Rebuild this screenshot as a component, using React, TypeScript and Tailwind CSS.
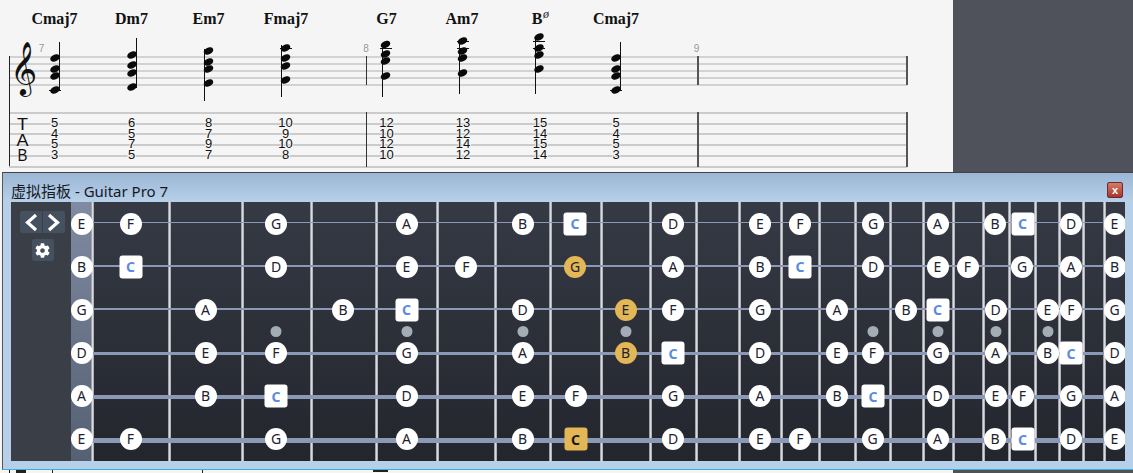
import { FaCog } from 'react-icons/fa'

const chords = [
	{ name: 'Cmaj7', nameX: 54.5, stem: 59, head: 55, top: 42, bottom: 90, notes: [58, 69, 76, 90], ledgers: [90], tab: ['5', '4', '5', '3'], tabX: 54.5 },
	{ name: 'Dm7', nameX: 131.5, stem: 136.5, head: 132, top: 38, bottom: 88, notes: [55, 65, 73, 87], ledgers: [], tab: ['6', '5', '7', '5'], tabX: 131.5 },
	{ name: 'Em7', nameX: 208.5, stem: 204.5, head: 208.5, top: 49, bottom: 101, notes: [51, 62, 69, 83], ledgers: [], tab: ['8', '7', '9', '7'], tabX: 208.5 },
	{ name: 'Fmaj7', nameX: 286, stem: 281.5, head: 285.5, top: 45, bottom: 97, notes: [48, 58, 66, 80], ledgers: [48], tab: ['10', '9', '10', '8'], tabX: 285.5 },
	{ name: 'G7', nameX: 386.5, stem: 382.5, head: 385.5, top: 48, bottom: 97, notes: [44.5, 54, 61, 76], ledgers: [48], tab: ['12', '10', '12', '10'], tabX: 386.5 },
	{ name: 'Am7', nameX: 462, stem: 459.5, head: 462.5, top: 41, bottom: 94, notes: [41, 51, 58, 73], ledgers: [41, 48], tab: ['13', '12', '14', '12'], tabX: 463 },
	{ name: 'B', nameX: 537, stem: 535.5, head: 539, top: 38, bottom: 94, notes: [37, 48, 55, 69], ledgers: [41, 48], tab: ['15', '14', '15', '14'], tabX: 540 },
	{ name: 'Cmaj7', nameX: 616, stem: 620.5, head: 616, top: 42, bottom: 90, notes: [58, 69, 76, 90], ledgers: [90], tab: ['5', '4', '5', '3'], tabX: 616 },
]

const staffLines = [56, 63, 70, 77, 84]
const tabLines = [112, 123, 133, 144, 155, 166]
const tabBaselines = [127, 138, 148, 159]

const frets = [92, 169, 242, 311, 376, 437, 495, 550, 601, 650, 696, 739, 781, 819, 855, 890, 923, 953, 983, 1009, 1035, 1059, 1083, 1104]
const inlays = [276, 406.5, 522.5, 625.5, 872.5, 937.5, 995.5, 1047.5]

type Note = { n: string; x: number; gold?: boolean }

const strings: { thickness: string; notes: Note[] }[] = [
	{
		thickness: 'h-px',
		notes: [
			{ n: 'E', x: 81.5 }, { n: 'F', x: 130.5 }, { n: 'G', x: 276 }, { n: 'A', x: 406.5 }, { n: 'B', x: 522.5 },
			{ n: 'C', x: 575 }, { n: 'D', x: 673 }, { n: 'E', x: 760 }, { n: 'F', x: 800 }, { n: 'G', x: 873 },
			{ n: 'A', x: 937.5 }, { n: 'B', x: 995 }, { n: 'C', x: 1022.5 }, { n: 'D', x: 1071 }, { n: 'E', x: 1114.5 },
		],
	},
	{
		thickness: 'h-[2px]',
		notes: [
			{ n: 'B', x: 81.5 }, { n: 'C', x: 130.5 }, { n: 'D', x: 276 }, { n: 'E', x: 406.5 }, { n: 'F', x: 466 },
			{ n: 'G', x: 575, gold: true }, { n: 'A', x: 673 }, { n: 'B', x: 760 }, { n: 'C', x: 800 }, { n: 'D', x: 873 },
			{ n: 'E', x: 937.5 }, { n: 'F', x: 967.5 }, { n: 'G', x: 1022 }, { n: 'A', x: 1071 }, { n: 'B', x: 1114.5 },
		],
	},
	{
		thickness: 'h-[2px]',
		notes: [
			{ n: 'G', x: 81.5 }, { n: 'A', x: 205.5 }, { n: 'B', x: 343 }, { n: 'C', x: 406.5 }, { n: 'D', x: 522.5 },
			{ n: 'E', x: 625.5, gold: true }, { n: 'F', x: 673 }, { n: 'G', x: 760 }, { n: 'A', x: 837 }, { n: 'B', x: 906 },
			{ n: 'C', x: 937.5 }, { n: 'D', x: 995.5 }, { n: 'E', x: 1047.5 }, { n: 'F', x: 1071 }, { n: 'G', x: 1114.5 },
		],
	},
	{
		thickness: 'h-[3px]',
		notes: [
			{ n: 'D', x: 81.5 }, { n: 'E', x: 205.5 }, { n: 'F', x: 276 }, { n: 'G', x: 406.5 }, { n: 'A', x: 522.5 },
			{ n: 'B', x: 625.5, gold: true }, { n: 'C', x: 673 }, { n: 'D', x: 760 }, { n: 'E', x: 837 }, { n: 'F', x: 872.5 },
			{ n: 'G', x: 937.5 }, { n: 'A', x: 995.5 }, { n: 'B', x: 1047.5 }, { n: 'C', x: 1071 }, { n: 'D', x: 1114.5 },
		],
	},
	{
		thickness: 'h-1',
		notes: [
			{ n: 'A', x: 81.5 }, { n: 'B', x: 205.5 }, { n: 'C', x: 276 }, { n: 'D', x: 406.5 }, { n: 'E', x: 522.5 },
			{ n: 'F', x: 575.5 }, { n: 'G', x: 673 }, { n: 'A', x: 760 }, { n: 'B', x: 837 }, { n: 'C', x: 873 },
			{ n: 'D', x: 937.5 }, { n: 'E', x: 995.5 }, { n: 'F', x: 1022.5 }, { n: 'G', x: 1071 }, { n: 'A', x: 1114.5 },
		],
	},
	{
		thickness: 'h-[5px]',
		notes: [
			{ n: 'E', x: 81.5 }, { n: 'F', x: 130.5 }, { n: 'G', x: 276 }, { n: 'A', x: 406.5 }, { n: 'B', x: 522.5 },
			{ n: 'C', x: 575.5, gold: true }, { n: 'D', x: 673 }, { n: 'E', x: 760 }, { n: 'F', x: 800 }, { n: 'G', x: 872.5 },
			{ n: 'A', x: 937.5 }, { n: 'B', x: 995 }, { n: 'C', x: 1022.5 }, { n: 'D', x: 1071 }, { n: 'E', x: 1114.5 },
		],
	},
]

const BOARD_LEFT = 71

function Score() {
	return (
		<svg width="953" height="172" className="block" fontFamily="'Liberation Sans', sans-serif">
			<g shapeRendering="crispEdges">
				{staffLines.map((y) => (
					<rect key={y} x="9" y={y} width="898" height="2" fill="#d2d2d2" />
				))}
				{tabLines.map((y) => (
					<rect key={y} x="9" y={y} width="898" height="2" fill="#cbcbcb" />
				))}
				<rect x="9" y="56" width="1" height="110" fill="#222" />
				{[366, 697, 906].map((x) => (
					<g key={x}>
						<rect x={x} y="56" width={x === 366 ? 1 : 2} height="29" fill={x === 366 ? '#333' : '#555'} />
						<rect x={x} y="112" width={x === 366 ? 1 : 2} height="55" fill={x === 366 ? '#333' : '#555'} />
					</g>
				))}
			</g>

			<text x="23" y="84" textAnchor="middle" fontSize="46" fill="#111" fontFamily="'DejaVu Sans', sans-serif">𝄞</text>

			<text x="41.5" y="52" textAnchor="middle" fontSize="10" fill="#999">7</text>
			<text x="366" y="52" textAnchor="middle" fontSize="10" fill="#999">8</text>
			<text x="696.5" y="52" textAnchor="middle" fontSize="10" fill="#999">9</text>

			<g fontSize="16" fill="#111" textAnchor="middle">
				<text x="22.5" y="130" textLength="11" lengthAdjust="spacingAndGlyphs">T</text>
				<text x="22.5" y="146" textLength="12" lengthAdjust="spacingAndGlyphs">A</text>
				<text x="22.5" y="160.5" textLength="10" lengthAdjust="spacingAndGlyphs">B</text>
			</g>

			{chords.map((c) => (
				<g key={c.nameX}>
					<text x={c.nameX} y="24" textAnchor="middle" fontSize="16" fontWeight="700" fill="#111" fontFamily="'Liberation Serif', serif">
						{c.name}
					</text>
					{c.ledgers.map((y) => (
						<rect key={y} x={c.head - 6} y={y} width="12" height="1" fill="#111" shapeRendering="crispEdges" />
					))}
					<rect x={c.stem - 0.5} y={c.top} width="1" height={c.bottom - c.top} fill="#111" shapeRendering="crispEdges" />
					{c.notes.map((y) => (
						<ellipse key={y} cx={c.head} cy={y} rx="5" ry="3.4" fill="#0a0a0a" transform={`rotate(-24 ${c.head} ${y})`} />
					))}
					{c.tab.map((t, i) => (
						<text
							key={i}
							x={c.tabX}
							y={tabBaselines[i]}
							textAnchor="middle"
							fontSize="13"
							fill="#111"
							stroke="#f5f5f5"
							strokeWidth="2"
							paintOrder="stroke"
						>
							{t}
						</text>
					))}
				</g>
			))}

			<text x="546" y="18" textAnchor="middle" fontSize="12" fontStyle="italic" fill="#222" fontFamily="'Liberation Serif', serif">ø</text>
		</svg>
	)
}

function NoteMarker({ n, x, gold }: Note) {
	const isC = n === 'C'
	const shape = isC ? 'h-[23px] w-[23px] rounded-[3px] font-bold' : 'h-[22px] w-[22px] rounded-full'
	const fill = gold ? 'bg-[#e3b656]' : 'bg-white'
	const ink = isC ? (gold ? 'text-[#16181d]' : 'text-[#5a8be0]') : 'text-[#1b2230]'
	return (
		<span
			className={`absolute top-[21.5px] flex -translate-x-1/2 -translate-y-1/2 items-center justify-center text-[14px] leading-none ${shape} ${fill} ${ink}`}
			style={{ left: x - BOARD_LEFT }}
		>
			{n}
		</span>
	)
}

function Fretboard() {
	return (
		<div className="relative h-[259px] flex-1 overflow-hidden bg-gradient-to-b from-[#363a45] to-[#23262d] font-['Noto_Sans',sans-serif]">
			<div className="absolute inset-y-0 left-0 w-[20px] bg-gradient-to-b from-[#808aa1] to-[#566073]" />
			{frets.map((x) => (
				<div
					key={x}
					className="absolute inset-y-0 w-[3px] bg-gradient-to-r from-[#85888f] via-[#d9dbe1] to-[#9b9ea6]"
					style={{ left: x - BOARD_LEFT - 1 }}
				/>
			))}
			{inlays.map((x) => (
				<span
					key={x}
					className="absolute top-[124px] h-[11px] w-[11px] -translate-x-1/2 rounded-full bg-[#a4adb5]"
					style={{ left: x - BOARD_LEFT }}
				/>
			))}
			<div className="absolute inset-0 grid grid-rows-6">
				{strings.map((s, i) => (
					<div key={i} className="relative">
						<div className={`absolute left-[20px] right-0 top-[20px] bg-[#8b99b6] ${s.thickness}`} />
						{s.notes.map((note) => (
							<NoteMarker key={note.x} {...note} />
						))}
					</div>
				))}
			</div>
		</div>
	)
}

function SidePanel() {
	return (
		<div className="flex h-[259px] w-[60px] flex-col items-center gap-[6px] bg-[#3a3e47] pl-[3px] pt-[9px]">
			<div className="flex h-[22px] w-[45px] overflow-hidden rounded-[2px]">
				<div className="flex flex-1 items-center justify-center border-r border-[#3a3e47] bg-[#465160]">
					<svg width="14" height="19" viewBox="0 0 14 19" fill="none" stroke="#fff" strokeWidth="3.2">
						<path d="M12 2 L3.5 9.5 L12 17" />
					</svg>
				</div>
				<div className="flex flex-1 items-center justify-center bg-[#465160]">
					<svg width="14" height="19" viewBox="0 0 14 19" fill="none" stroke="#fff" strokeWidth="3.2">
						<path d="M2 2 L10.5 9.5 L2 17" />
					</svg>
				</div>
			</div>
			<div className="flex h-[22px] w-[22px] items-center justify-center rounded-[2px] bg-[#465160] text-white">
				<FaCog size={15} />
			</div>
		</div>
	)
}

export default function App() {
	return (
		<div className="flex h-[473px] w-[1133px] flex-col overflow-hidden bg-[#f5f5f5]">
			<div className="flex h-[172px]">
				<div className="w-[953px] bg-[#f5f5f5]">
					<Score />
				</div>
				<div className="flex-1 bg-[#4f525b]" />
			</div>

			<div className="ml-[2px] h-[298px] border-l border-t border-b border-l-[#555] border-t-[#444] border-b-[#2db4e0] bg-[#b7cfe8]">
				<div className="flex h-[29px] items-center justify-between bg-gradient-to-b from-[#9bb7d5] to-[#b8d0e9] pl-[8px] pr-[10px]">
					<span className="mt-[8px] font-['Noto_Sans','Noto_Sans_CJK_SC',sans-serif] text-[15px] leading-none text-[#14181f]">
						虚拟指板 - Guitar Pro 7
					</span>
					<button className="mt-[5px] flex h-[16px] w-[16px] items-center justify-center rounded-[2px] border border-[#6a2a38] bg-gradient-to-b from-[#d77a63] to-[#a5372b] font-['Liberation_Sans',sans-serif] text-[11px] font-bold leading-none text-white">
						x
					</button>
				</div>
				<div className="flex pl-[8px] pr-[8px]">
					<SidePanel />
					<Fretboard />
				</div>
			</div>

			<div className="flex flex-1">
				<div className="w-[953px]">
					<svg width="953" height="3" className="block">
						<rect x="9" y="0" width="1" height="3" fill="#111" />
						<rect x="16" y="0" width="10" height="3" fill="#222" />
						<rect x="52" y="0" width="1" height="3" fill="#222" />
						<rect x="202" y="0" width="1" height="3" fill="#222" />
						<rect x="373" y="0" width="15" height="2" fill="#222" />
					</svg>
				</div>
				<div className="flex-1 bg-[#4f525b]" />
			</div>
		</div>
	)
}
